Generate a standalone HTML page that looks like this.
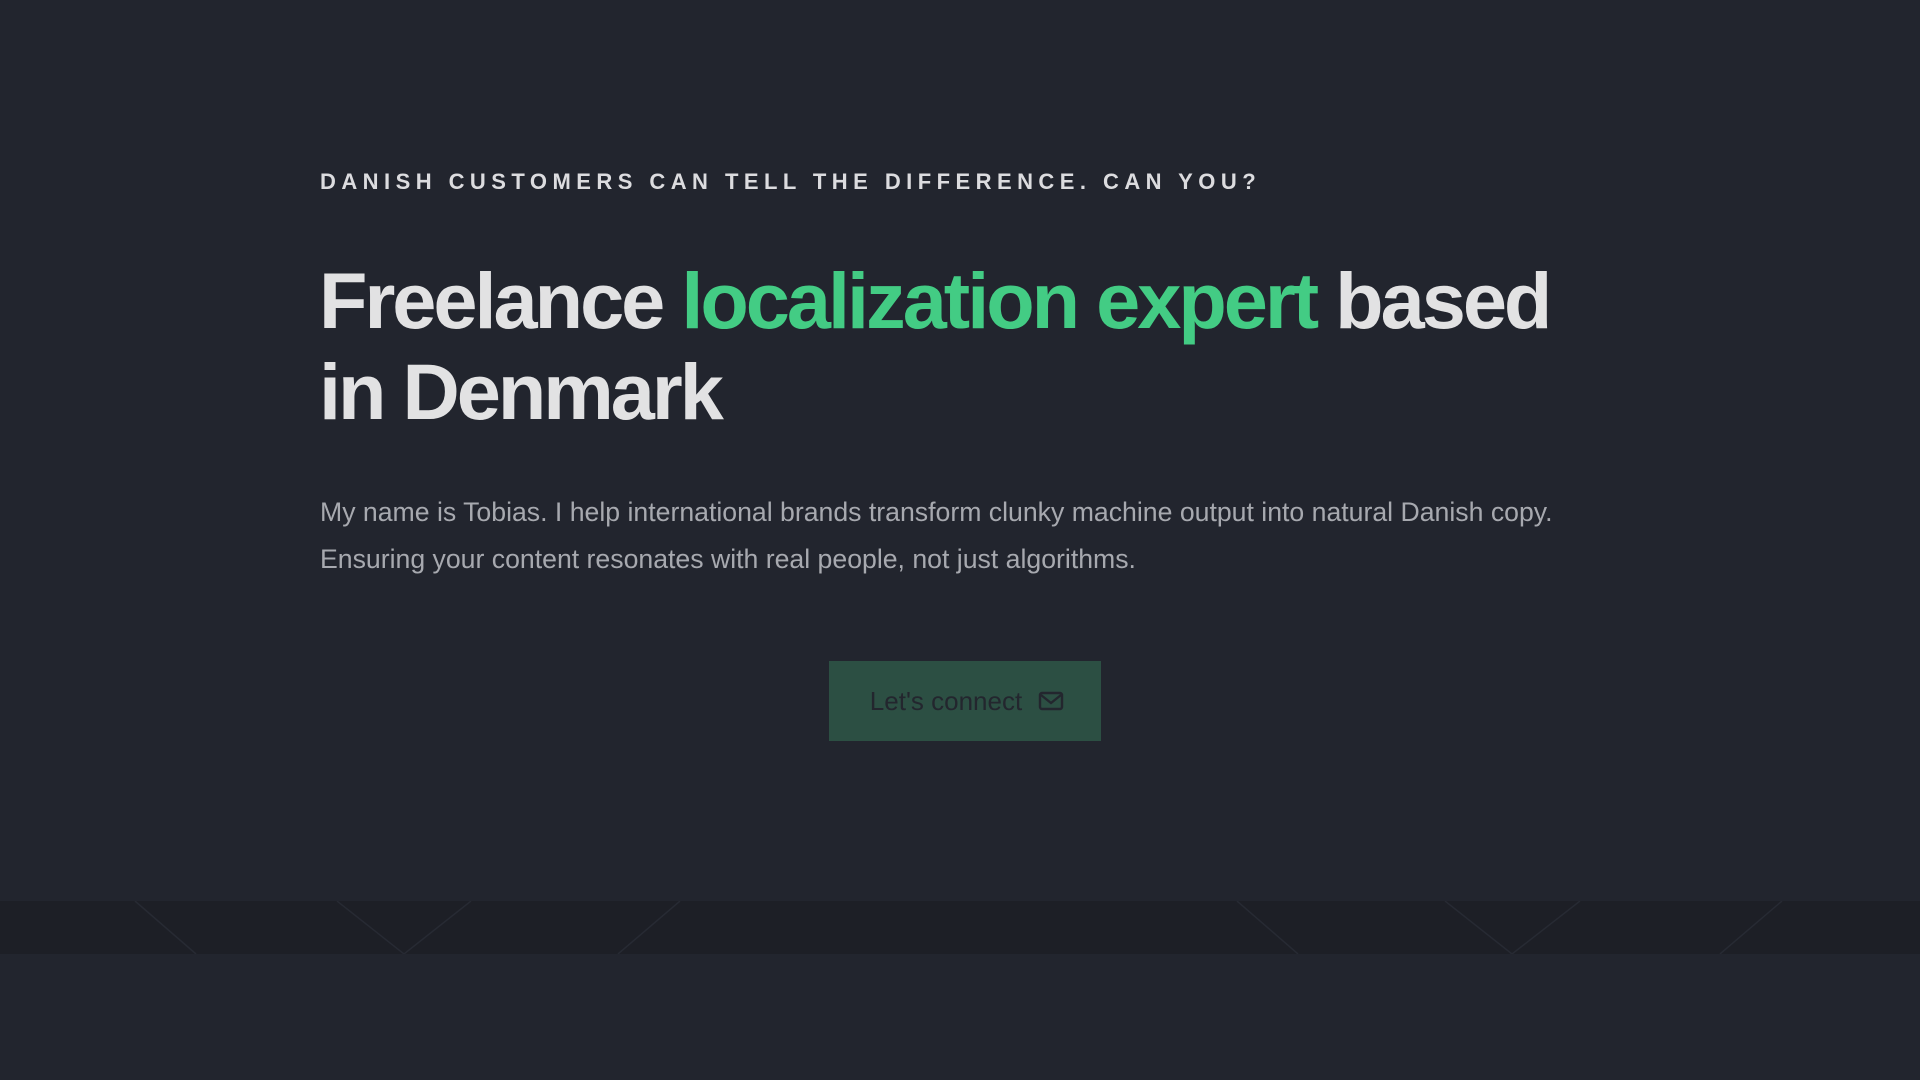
<!DOCTYPE html>
<html><head><meta charset="utf-8"><style>
html,body{margin:0;padding:0;background:#22252e;width:1920px;height:1080px;overflow:hidden;font-family:"Liberation Sans",Arial,sans-serif}
.sub{position:absolute;left:320px;top:169px;font-size:22px;font-weight:bold;letter-spacing:5.45px;color:#dcdcdf;white-space:nowrap}
h1{position:absolute;left:319px;top:255px;margin:0;font-size:79.3px;line-height:91px;font-weight:bold;letter-spacing:-3px;color:#e2e2e3;width:1270px}
h1 span{color:#43cc84}
p{position:absolute;left:320px;top:489px;margin:0;font-size:26.65px;line-height:47px;color:#a7a9af;width:1320px}
.btn{position:absolute;left:829px;top:661px;width:272px;height:80px;background:#2c4f43;color:#23262e;font-size:26px;display:flex;align-items:center;justify-content:center;gap:16px;padding-left:4px;box-sizing:border-box}
.band{position:absolute;left:0;top:901px;width:1920px;height:53px;background:#1d1f26}
</style></head><body>
<div class="sub">DANISH CUSTOMERS CAN TELL THE DIFFERENCE. CAN YOU?</div>
<h1>Freelance <span>localization expert</span> based in Denmark</h1>
<p>My name is Tobias. I help international brands transform clunky machine output into natural Danish copy. Ensuring your content resonates with real people, not just algorithms.</p>
<div class="btn">Let's connect <svg width="26" height="20" viewBox="0 0 26 20"><rect x="2" y="2" width="22" height="16" rx="2" fill="none" stroke="#23262e" stroke-width="2.4"/><path d="M3 4 L13 12 L23 4" fill="none" stroke="#23262e" stroke-width="2.4"/></svg></div>
<div class="band"><svg width="1920" height="53"><g stroke="#272a33" stroke-width="1.5" fill="none">
<path d="M135 0 L196 53"/><path d="M337 0 L404 53 L471 0"/><path d="M680 0 L618 53"/><path d="M1237 0 L1298 53"/><path d="M1445 0 L1512 53 L1580 0"/><path d="M1782 0 L1720 53"/></g></svg></div>
</body></html>
